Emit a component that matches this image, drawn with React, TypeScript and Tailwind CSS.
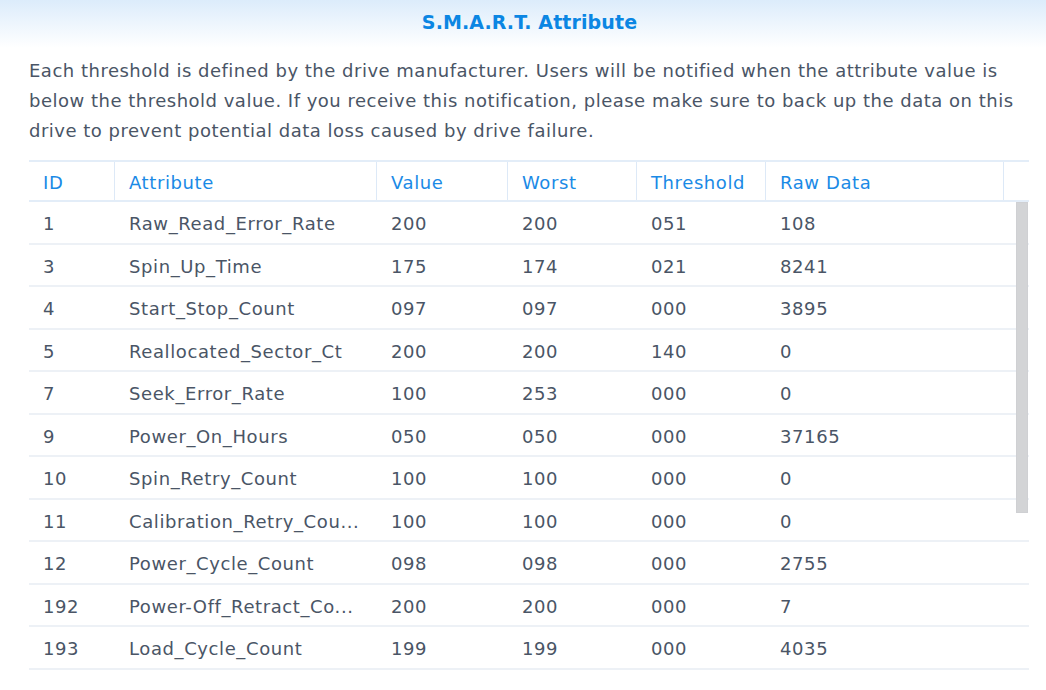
import React from "react";

const rows: [string, string, string, string, string, string][] = [
  ["1", "Raw_Read_Error_Rate", "200", "200", "051", "108"],
  ["3", "Spin_Up_Time", "175", "174", "021", "8241"],
  ["4", "Start_Stop_Count", "097", "097", "000", "3895"],
  ["5", "Reallocated_Sector_Ct", "200", "200", "140", "0"],
  ["7", "Seek_Error_Rate", "100", "253", "000", "0"],
  ["9", "Power_On_Hours", "050", "050", "000", "37165"],
  ["10", "Spin_Retry_Count", "100", "100", "000", "0"],
  ["11", "Calibration_Retry_Cou...", "100", "100", "000", "0"],
  ["12", "Power_Cycle_Count", "098", "098", "000", "2755"],
  ["192", "Power-Off_Retract_Co...", "200", "200", "000", "7"],
  ["193", "Load_Cycle_Count", "199", "199", "000", "4035"],
];

const widths = ["w-[86px]", "w-[262px]", "w-[131px]", "w-[129px]", "w-[129px]", "w-[238px]"];
const headers = ["ID", "Attribute", "Value", "Worst", "Threshold", "Raw Data"];

export default function App() {
  return (
    <div
      className="w-[1046px] h-[690px] bg-white overflow-hidden text-[#4a5566]"
      style={{ fontFamily: '"DejaVu Sans", Verdana, sans-serif' }}
    >
      <div className="h-[48px] bg-gradient-to-b from-[#dcecfb] to-white flex items-start justify-center pt-[8px] pl-[13px]">
        <span className="text-[19px] font-bold text-[#0b86e3] tracking-[0.1px]">S.M.A.R.T. Attribute</span>
      </div>
      <p className="px-[29px] pt-[8px] text-[18px] tracking-[0.5px] leading-[30px] text-[#4a5566]">
        Each threshold is defined by the drive manufacturer. Users will be notified when the attribute value is below the threshold value. If you receive this notification, please make sure to back up the data on this drive to prevent potential data loss caused by drive failure.
      </p>
      <div className="mx-[29px] mt-[14px] w-[1000px] relative">
        <div className="flex h-[42px] border-t-2 border-b-2 border-[#e3edf8] text-[#1a8ae6] text-[18px] tracking-[0.6px]">
          {headers.map((h, i) => (
            <div key={h} className={`${widths[i]} shrink-0 flex items-center pl-[14px] pt-[2px] border-r border-[#dde9f7]`}>
              {h}
            </div>
          ))}
          <div className="flex-1" />
        </div>
        {rows.map((r, ri) => (
          <div key={ri} className="flex h-[42.5px] border-b-2 border-[#edf1f6] text-[18px] tracking-[0.6px]">
            {r.map((c, i) => (
              <div key={i} className={`${widths[i]} shrink-0 flex items-center pl-[14px] pt-[3px] whitespace-nowrap overflow-hidden`}>
                {c}
              </div>
            ))}
            <div className="flex-1" />
          </div>
        ))}
        <div className="absolute left-[987px] top-[42px] w-[12px] h-[311px] bg-[#d3d4d6] border border-[#cfd0d3]" />
      </div>
    </div>
  );
}
